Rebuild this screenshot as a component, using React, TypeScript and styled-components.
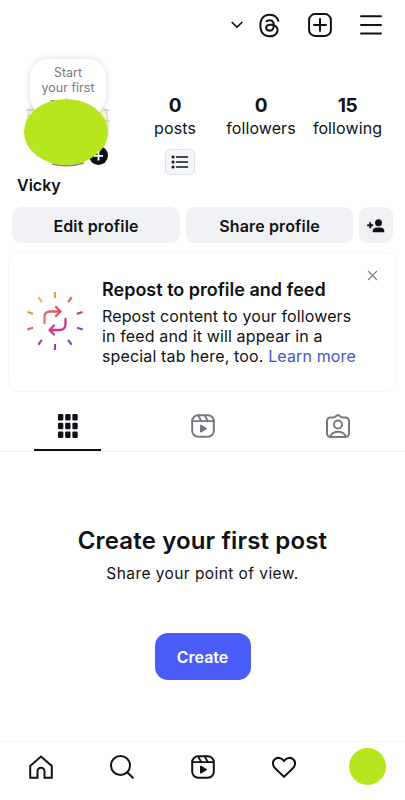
import React from "react";
import styled, { createGlobalStyle } from "styled-components";
import { FaThreads } from "react-icons/fa6";

const Global = createGlobalStyle`
  * { box-sizing: border-box; }
  body { margin: 0; background: #fff; }
  button { font: inherit; color: inherit; border: 0; padding: 0; background: none; }
  svg { display: block; flex: none; }
`;

const Screen = styled.div`
  width: 405px;
  height: 800px;
  overflow: hidden;
  display: flex;
  flex-direction: column;
  background: #fff;
  color: #101215;
  font-family: Inter, "Liberation Sans", sans-serif;
`;

const TopBar = styled.header`
  height: 50px;
  padding-right: 22px;
  display: flex;
  align-items: center;
  justify-content: flex-end;
`;

const TopButton = styled.button<{ $gap: number }>`
  display: flex;
  margin-left: ${(p) => p.$gap}px;
`;

const ProfileRow = styled.section`
  height: 126px;
  display: flex;
  padding-left: 24px;
`;

const Avatar = styled.div`
  position: relative;
  width: 87px;
  height: 126px;
`;

const PhotoEdge = styled.svg`
  position: absolute;
  left: 0;
  top: 46px;
`;

const NoteBubble = styled.div`
  position: absolute;
  left: 6px;
  top: 9px;
  width: 76px;
  height: 61px;
  padding-top: 6px;
  border-radius: 18px 18px 25px 25px;
  background: #fff;
  box-shadow: 0 0 6px rgba(0, 0, 0, 0.16);
  color: #777a7c;
  font-size: 12.5px;
  line-height: 15px;
  text-align: center;
  white-space: pre-line;
  overflow: hidden;
`;

const AddBadge = styled.div`
  position: absolute;
  left: 65px;
  top: 96px;
  width: 19px;
  height: 19px;
  border-radius: 50%;
  background: #0d1015;
`;

const Cover = styled.div`
  position: absolute;
  left: 0;
  top: 49px;
  width: 84px;
  height: 66px;
  border-radius: 50%;
  background: #b6e61d;
`;

const BadgePlus = styled.svg`
  position: absolute;
  left: 69px;
  top: 101px;
`;

const Stats = styled.div`
  display: grid;
  grid-template-columns: 86px 86px 87px;
  grid-template-rows: 54px auto;
  padding: 44px 0 0 21px;
`;

const Stat = styled.div`
  display: flex;
  flex-direction: column;
  align-items: center;
`;

const Count = styled.strong`
  font-size: 19px;
  line-height: 23px;
  font-weight: 650;
  letter-spacing: -0.3px;
`;

const Label = styled.span`
  font-size: 16px;
  line-height: 22px;
  letter-spacing: 0.1px;
`;

const ListChip = styled.div`
  width: 30px;
  height: 26px;
  margin: 1px 0 0 33px;
  border: 1px solid #dfe2e6;
  border-radius: 5px;
  background: #f2f5f9;
  display: flex;
  align-items: center;
  justify-content: center;
`;

const Name = styled.div`
  height: 31px;
  padding-left: 17px;
  font-size: 16px;
  line-height: 19px;
  font-weight: 600;
`;

const Actions = styled.div`
  display: grid;
  grid-template-columns: 168px 167px 34px;
  gap: 6px;
  padding-left: 12px;
  height: 36px;
`;

const ActionButton = styled.button`
  border-radius: 9px;
  background: #f0f1f5;
  display: flex;
  align-items: center;
  justify-content: center;
  font-size: 16px;
  line-height: 20px;
  font-weight: 600;
  letter-spacing: 0.15px;
  padding-top: 1px;
`;

const Card = styled.section`
  display: flex;
  width: 389px;
  height: 140px;
  margin: 9px 0 0 8px;
  border: 1px solid #f7f7f8;
  border-radius: 11px;
  padding: 0 18px 0 17px;
`;

const RepostArt = styled.svg`
  margin-top: 38px;
`;

const CardCopy = styled.div`
  width: 270px;
  padding: 26px 0 0 18px;
  margin-right: auto;
  white-space: nowrap;
`;

const CardTitle = styled.h2`
  margin: 0;
  font-size: 18px;
  line-height: 22px;
  font-weight: 600;
`;

const CardLine = styled.div`
  font-size: 16px;
  line-height: 20px;
  letter-spacing: 0.14px;
`;

const CardBody = styled.div`
  padding-top: 5px;
`;

const Learn = styled.a`
  color: #4656bd;
`;

const CloseIcon = styled.svg`
  margin-top: 17px;
`;

const Tabs = styled.nav`
  height: 60px;
  display: grid;
  grid-template-columns: repeat(3, 1fr);
  border-bottom: 1px solid #f1f1f2;
`;

const Tab = styled.button<{ $active?: boolean }>`
  position: relative;
  display: flex;
  justify-content: center;
  padding-top: 22px;
  color: ${(p) => (p.$active ? "#0d1015" : "#75797e")};
  &::after {
    content: "";
    position: absolute;
    bottom: 0;
    width: 67px;
    height: 2px;
    background: ${(p) => (p.$active ? "#0d1015" : "transparent")};
  }
`;

const Empty = styled.main`
  flex: 1;
  display: flex;
  flex-direction: column;
  align-items: center;
  padding-top: 73px;
`;

const EmptyTitle = styled.h1`
  margin: 0;
  font-size: 24px;
  line-height: 32px;
  font-weight: 620;
  letter-spacing: 0.15px;
`;

const EmptyText = styled.p`
  margin: 7px 0 0;
  font-size: 15.5px;
  line-height: 20px;
  letter-spacing: 0.43px;
`;

const CreateButton = styled.button`
  width: 96px;
  height: 47px;
  margin-top: 49px;
  border-radius: 13px;
  background: #4a5df9;
  color: #fff;
  font-size: 16px;
  font-weight: 600;
`;

const BottomNav = styled.nav`
  height: 59px;
  border-top: 1px solid #f7f4f5;
  display: grid;
  grid-template-columns: repeat(5, 1fr);
`;

const NavItem = styled.button`
  display: flex;
  justify-content: center;
  padding-top: 13px;
`;

const NavAvatar = styled.span`
  width: 37px;
  height: 37px;
  margin: -7px 0 0 5px;
  border-radius: 50%;
  background: #b6e61d;
`;

const line = {
  fill: "none",
  stroke: "currentColor",
  strokeWidth: 2,
  strokeLinecap: "round",
  strokeLinejoin: "round",
} as const;

const ReelsIcon = () => (
  <svg width="24" height="24" viewBox="0 0 24 24" {...line}>
    <rect x="1.2" y="1.2" width="21.6" height="21.6" rx="6" />
    <path d="M1.5 7.2h21M7.2 1.5l3 5.5M13.8 1.5l3 5.5" strokeWidth="1.8" />
    <path d="M9.8 11.5v6.2l5.4-3.1z" fill="currentColor" strokeWidth="1.6" />
  </svg>
);

const rays = [
  ["#e0a33c", 0],
  ["#dd6656", 35],
  ["#c83e92", 72],
  ["#9340c4", 107],
  ["#8441cf", 145],
  ["#8d3bd0", 180],
  ["#b83c9c", 215],
  ["#dc665f", 253],
  ["#e0a044", 288],
  ["#e6bb47", 325],
] as const;

export default function App() {
  return (
    <>
      <Global />
      <Screen>
        <TopBar>
          <TopButton $gap={0}>
            <svg width="12" height="8" viewBox="0 0 12 8" {...line} strokeWidth={1.7}>
              <path d="M1.2 1.5 6 6.2l4.8-4.7" />
            </svg>
          </TopButton>
          <TopButton $gap={14}>
            <FaThreads size={25} />
          </TopButton>
          <TopButton $gap={26}>
            <svg width="24" height="24" viewBox="0 0 24 24" {...line}>
              <rect x="1.1" y="1.1" width="21.8" height="21.8" rx="6" />
              <path d="M12 6v12M6 12h12" />
            </svg>
          </TopButton>
          <TopButton $gap={28}>
            <svg width="23" height="22" viewBox="0 0 23 22" {...line}>
              <path d="M1 2.3h20M1 11h20M1 19.5h20" />
            </svg>
          </TopButton>
        </TopBar>

        <ProfileRow>
          <Avatar>
            <PhotoEdge width="88" height="74" viewBox="0 0 88 74" fill="none">
              <ellipse cx="43.5" cy="30" rx="42.5" ry="40" fill="#f4f1df" />
              <path d="M2 14h8M3 20h6M80 14h5M80 25h6" stroke="#b9b8a4" />
              <path d="M83 14v20M5 12v11" stroke="#d8d5bb" />
              <path d="M28 68q16 4 32-1" stroke="#9b8168" strokeWidth="1.5" />
            </PhotoEdge>
            <NoteBubble>{"Start\nyour first\nnote…"}</NoteBubble>
            <AddBadge />
            <Cover />
            <BadgePlus width="11" height="10" viewBox="0 0 11 10" fill="none" stroke="#fff" strokeWidth="1.8">
              <path d="M5.5 0v9.5M1 4.8h9" />
            </BadgePlus>
          </Avatar>
          <Stats>
            <Stat>
              <Count>0</Count>
              <Label>posts</Label>
            </Stat>
            <Stat>
              <Count>0</Count>
              <Label>followers</Label>
            </Stat>
            <Stat>
              <Count>15</Count>
              <Label>following</Label>
            </Stat>
            <ListChip>
              <svg width="18" height="14" viewBox="0 0 18 14" fill="currentColor">
                <circle cx="2" cy="2" r="1.5" />
                <circle cx="2" cy="7" r="1.5" />
                <circle cx="2" cy="12" r="1.5" />
                <path d="M5.5 2h11M5.5 7h11M5.5 12h11" stroke="currentColor" strokeWidth="1.6" strokeLinecap="round" />
              </svg>
            </ListChip>
          </Stats>
        </ProfileRow>

        <Name>Vicky</Name>

        <Actions>
          <ActionButton>Edit profile</ActionButton>
          <ActionButton>Share profile</ActionButton>
          <ActionButton>
            <svg width="18" height="14" viewBox="0 0 18 14" fill="currentColor">
              <circle cx="11.5" cy="3.7" r="3.5" />
              <path d="M5.7 13.3v-1.5c0-2 1.8-3.3 4-3.3h3.6c2.3 0 4 1.3 4 3.3v1.5z" />
              <path d="M3.2 3.3v6M.2 6.3h6" stroke="currentColor" strokeWidth="1.9" />
            </svg>
          </ActionButton>
        </Actions>

        <Card>
          <RepostArt width="58" height="60" viewBox="0 0 58 60" fill="none">
            <defs>
              <linearGradient id="warm" x1="18" y1="30" x2="36" y2="18" gradientUnits="userSpaceOnUse">
                <stop stopColor="#e9775a" />
                <stop offset="1" stopColor="#df4a60" />
              </linearGradient>
            </defs>
            {rays.map(([color, angle]) => (
              <path
                key={angle}
                d="M29 1v6"
                stroke={color}
                strokeWidth="2.2"
                transform={`rotate(${angle} 29 30)`}
              />
            ))}
            <g strokeWidth="2.3" strokeLinecap="round" strokeLinejoin="round">
              <path d="M18.500 32v-6q0-5.500 5.500-5.500H34M30 16l4.500 4.500-4.500 4.500" stroke="url(#warm)" />
              <path d="M39.500 28v5q0 6-6 6H24M28 34.500 23.500 39l4.500 4.500" stroke="#d2358d" />
            </g>
          </RepostArt>
          <CardCopy>
            <CardTitle>Repost to profile and feed</CardTitle>
            <CardBody>
              <CardLine>Repost content to your followers</CardLine>
              <CardLine>in feed and it will appear in a</CardLine>
              <CardLine>
                special tab here, too. <Learn>Learn more</Learn>
              </CardLine>
            </CardBody>
          </CardCopy>
          <CloseIcon width="11" height="11" viewBox="0 0 11 11" fill="none" stroke="#808386" strokeWidth="1.3">
            <path d="m1 1 9 9M10 1l-9 9" />
          </CloseIcon>
        </Card>

        <Tabs>
          <Tab $active>
            <svg width="20" height="24" viewBox="0 0 20 24" fill="currentColor">
              {[0, 7.2, 14.4].map((x) =>
                [0, 8.8, 17.4].map((y) => (
                  <rect key={`${x}-${y}`} x={x} y={y} width="5.3" height="6.5" rx="1.2" />
                ))
              )}
            </svg>
          </Tab>
          <Tab>
            <ReelsIcon />
          </Tab>
          <Tab>
            <svg width="24" height="24" viewBox="0 0 24 24" {...line}>
              <path d="M4.5 3.5h2.7c1.5 0 2-.5 3-1.5L12 .9 13.8 2c1 1 1.5 1.5 3 1.5h2.7A3.4 3.4 0 0 1 23 7v12.5a3.400 3.400 0 0 1-3.500 3.400h-15A3.400 3.400 0 0 1 1 19.500V7a3.400 3.400 0 0 1 3.500-3.500z" />
              <circle cx="12" cy="10.5" r="4" />
              <path d="M4 22.5c1.7-3.1 4.5-4.7 8-4.7s6.3 1.6 8 4.7" />
            </svg>
          </Tab>
        </Tabs>

        <Empty>
          <EmptyTitle>Create your first post</EmptyTitle>
          <EmptyText>Share your point of view.</EmptyText>
          <CreateButton>Create</CreateButton>
        </Empty>

        <BottomNav>
          <NavItem>
            <svg width="24" height="24" viewBox="0 0 24 24" {...line} strokeLinejoin="miter">
              <path d="M1.2 22.8V11L12 1.5 22.8 11v11.8h-7.3v-6.5a3.5 3.5 0 0 0-7 0v6.5z" />
            </svg>
          </NavItem>
          <NavItem>
            <svg width="24" height="24" viewBox="0 0 24 24" {...line}>
              <circle cx="10.5" cy="10.5" r="9.5" />
              <path d="m17.5 17.5 5.3 5.2" />
            </svg>
          </NavItem>
          <NavItem>
            <ReelsIcon />
          </NavItem>
          <NavItem>
            <svg width="24" height="24" viewBox="0 0 26 24" {...line} strokeWidth={2.2}>
              <path d="M13 22.7 3.9 13.8C.2 10.4.3 6.3 2.7 3.9 5.8.9 10.7 1.8 13 5.6c2.3-3.8 7.2-4.7 10.3-1.7 2.4 2.4 2.5 6.5-1.2 9.900z" />
            </svg>
          </NavItem>
          <NavItem>
            <NavAvatar />
          </NavItem>
        </BottomNav>
      </Screen>
    </>
  );
}
